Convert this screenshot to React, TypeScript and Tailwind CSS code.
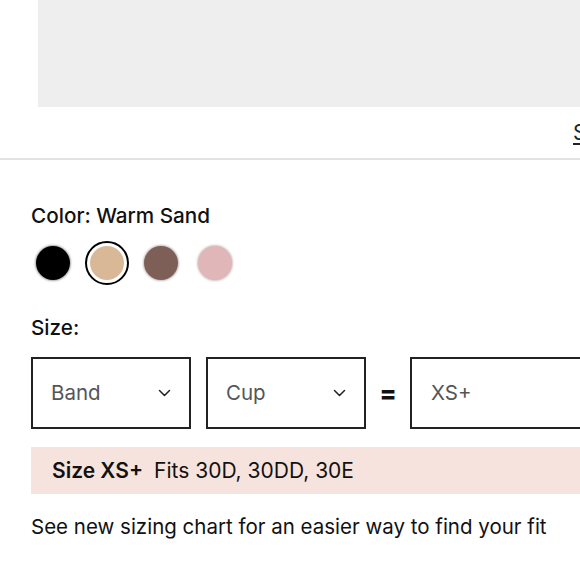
import React from "react";

function Chevron() {
  return (
    <svg width="13" height="8" viewBox="0 0 13 8" fill="none" className="shrink-0">
      <path d="M1.5 1.5 L6.5 6.5 L11.5 1.5" stroke="#222" strokeWidth="1.5" strokeLinecap="round" strokeLinejoin="round" />
    </svg>
  );
}

export default function App() {
  const font = { fontFamily: "Inter, 'Liberation Sans', Arial, sans-serif" };
  return (
    <div className="w-[580px] h-[580px] overflow-hidden bg-white text-[#111]" style={font}>
      <div className="h-[107px] ml-[38px] bg-[#eeeeee]" />
      <div className="h-[51px] flex items-center pl-[573px] whitespace-nowrap overflow-hidden">
        <span className="text-[21px] underline underline-offset-[3px] text-[#222]">Size Guide</span>
      </div>
      <div className="h-[2px] bg-[#e2e2e2]" />
      <div className="pl-[31px] pt-[42px]">
        <div className="text-[20.7px] font-medium leading-[28px]">Color: Warm Sand</div>
        <div className="flex items-center gap-[10px] mt-[11px]">
          <div className="w-[44px] h-[44px] flex items-center justify-center">
            <div className="w-[34px] h-[34px] rounded-full bg-black shadow-[0_0_2px_1px_rgba(0,0,0,0.35)]" />
          </div>
          <div className="w-[44px] h-[44px] rounded-full border-2 border-black flex items-center justify-center">
            <div className="w-[34px] h-[34px] rounded-full bg-[#d9b898]" />
          </div>
          <div className="w-[44px] h-[44px] flex items-center justify-center">
            <div className="w-[34px] h-[34px] rounded-full bg-[#7e5f58] shadow-[0_0_2px_1px_rgba(120,100,100,0.45)]" />
          </div>
          <div className="w-[44px] h-[44px] flex items-center justify-center">
            <div className="w-[34px] h-[34px] rounded-full bg-[#e0b6b8] shadow-[0_0_2px_1px_rgba(160,140,140,0.5)]" />
          </div>
        </div>
        <div className="text-[20.7px] font-medium leading-[28px] mt-[29px]">Size:</div>
        <div className="flex items-center mt-[15px] h-[72px]">
          <div className="w-[160px] shrink-0 h-[72px] border-2 border-[#222] flex items-center justify-between pl-[18px] pr-[18px]">
            <span className="text-[20.5px] text-[#555]">Band</span>
            <Chevron />
          </div>
          <div className="w-[160px] shrink-0 h-[72px] ml-[15px] border-2 border-[#222] flex items-center justify-between pl-[18px] pr-[18px]">
            <span className="text-[20.5px] text-[#555]">Cup</span>
            <Chevron />
          </div>
          <div className="w-[44px] shrink-0 flex justify-center text-[25px] font-extrabold leading-none">=</div>
          <div className="w-[200px] shrink-0 h-[72px] border-2 border-[#222] flex items-center pl-[19px]">
            <span className="text-[20.5px] text-[#555]">XS+</span>
          </div>
        </div>
        <div className="mt-[18px] h-[47px] bg-[#f7e3dd] flex items-center pl-[21px] text-[21px]">
          <span className="font-semibold">Size XS+</span>
          <span className="ml-[11px]">Fits 30D, 30DD, 30E</span>
        </div>
        <div className="mt-[19px] text-[20.5px] leading-[28px] whitespace-nowrap">See new sizing chart for an easier way to find your fit</div>
      </div>
    </div>
  );
}
